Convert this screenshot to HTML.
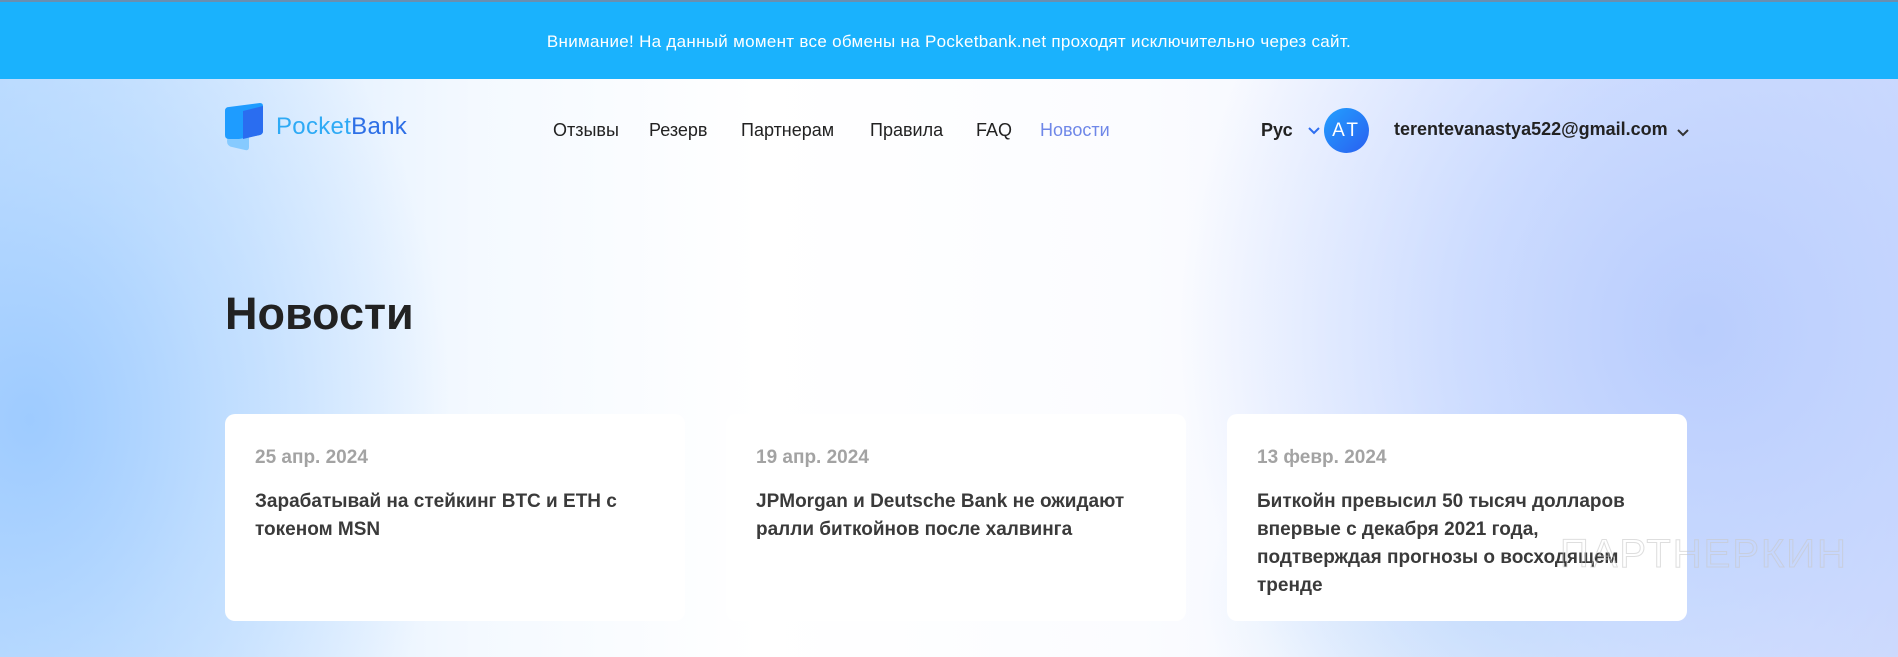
<!DOCTYPE html>
<html><head><meta charset="utf-8"><style>
*{margin:0;padding:0;box-sizing:border-box}
body{width:1898px;height:657px;overflow:hidden;font-family:"Liberation Sans",sans-serif;position:relative;
background:
radial-gradient(ellipse 420px 560px at 30px 420px,#9ecbff 0%,rgba(170,210,255,.6) 45%,rgba(255,255,255,0) 100%),
radial-gradient(ellipse 520px 560px at 1700px 330px,#b9cdfd 0%,rgba(190,210,255,.7) 45%,rgba(255,255,255,0) 100%),
radial-gradient(ellipse 300px 200px at 1500px 600px,#cfe6fb 0%,rgba(255,255,255,0) 100%),
linear-gradient(90deg,#c8e2ff 0%,#f4f9ff 25%,#fff 40%,#fbfcff 60%,#eef2ff 80%,#d6defc 100%);}
.top{position:absolute;left:0;top:0;width:1898px;height:79px;background:#1ab2fd;border-top:2px solid #6a8fb0;color:#fff;font-size:17px;letter-spacing:.3px;text-align:center;line-height:79px}
.logo{position:absolute;left:225px;top:103px}
.logotxt{position:absolute;left:276px;top:113px;font-size:24px;color:#2eaaf5;letter-spacing:.3px}
.logotxt b{font-weight:normal;color:#2d6fe6}
.nav{position:absolute;top:120px;font-size:18px;color:#222}
.lang{position:absolute;left:1261px;top:120px;font-size:18px;font-weight:bold;color:#222}
.av{position:absolute;left:1324px;top:108px;width:45px;height:45px;border-radius:50%;background:linear-gradient(135deg,#22a0ff,#2a5ff0);color:#fff;font-size:19px;text-align:center;line-height:45px;letter-spacing:3px}
.mail{position:absolute;left:1394px;top:119px;font-size:18px;font-weight:bold;color:#222}
h1{position:absolute;left:225px;top:288px;font-size:45px;color:#222;font-weight:bold}
.card{position:absolute;top:414px;width:460px;height:207px;background:#fff;border-radius:10px;padding:32px 30px}
.d{font-size:19px;font-weight:bold;color:#a3a3a3;margin-top:1px}
.t{font-size:19px;font-weight:bold;color:#3a3a3a;line-height:28px;margin-top:19px}
.wm{position:absolute;left:1560px;top:532px;font-size:40px;color:transparent;-webkit-text-stroke:1px rgba(200,200,200,.6);letter-spacing:2px}
</style></head><body>
<div class="top">Внимание! На данный момент все обмены на Pocketbank.net проходят исключительно через сайт.</div>
<svg class="logo" width="40" height="48" viewBox="0 0 40 48"><path d="M5 17 L24 22 L24 44 Q24 48 20 47 L7 44 Q2 43 2 38 Z" fill="#86caff"/><path d="M0 8 Q0 4 4 4 L35 0 Q38 0 38 3 L38 28 Q38 31 35 32 L14 36 L4 36 Q0 36 0 32 Z" fill="#1e9cff"/><path d="M18 8 L38 3 L38 28 Q38 31 35 32 L18 36 Z" fill="#2a6df0"/></svg>
<div class="logotxt">Pocket<b>Bank</b></div>
<div class="nav" style="left:553px">Отзывы</div>
<div class="nav" style="left:649px">Резерв</div>
<div class="nav" style="left:741px">Партнерам</div>
<div class="nav" style="left:870px">Правила</div>
<div class="nav" style="left:976px">FAQ</div>
<div class="nav" style="left:1040px;color:#6f87e8">Новости</div>
<div class="lang">Рус</div>
<svg style="position:absolute;left:1307px;top:126px" width="14" height="10"><path d="M2 2 L7 7 L12 2" stroke="#2e6ef0" stroke-width="2" fill="none"/></svg>
<div class="av">AT</div>
<div class="mail">terentevanastya522@gmail.com</div>
<svg style="position:absolute;left:1676px;top:128px" width="14" height="10"><path d="M2 2 L7 7 L12 2" stroke="#333" stroke-width="2" fill="none"/></svg>
<h1>Новости</h1>
<div class="card" style="left:225px"><div class="d">25 апр. 2024</div><div class="t">Зарабатывай на стейкинг BTC и ETH с<br>токеном MSN</div></div>
<div class="card" style="left:726px"><div class="d">19 апр. 2024</div><div class="t">JPMorgan и Deutsche Bank не ожидают<br>ралли биткойнов после халвинга</div></div>
<div class="card" style="left:1227px"><div class="d">13 февр. 2024</div><div class="t">Биткойн превысил 50 тысяч долларов<br>впервые с декабря 2021 года,<br>подтверждая прогнозы о восходящем<br>тренде</div></div>
<div class="wm">ПАРТНЕРКИН</div>
</body></html>
